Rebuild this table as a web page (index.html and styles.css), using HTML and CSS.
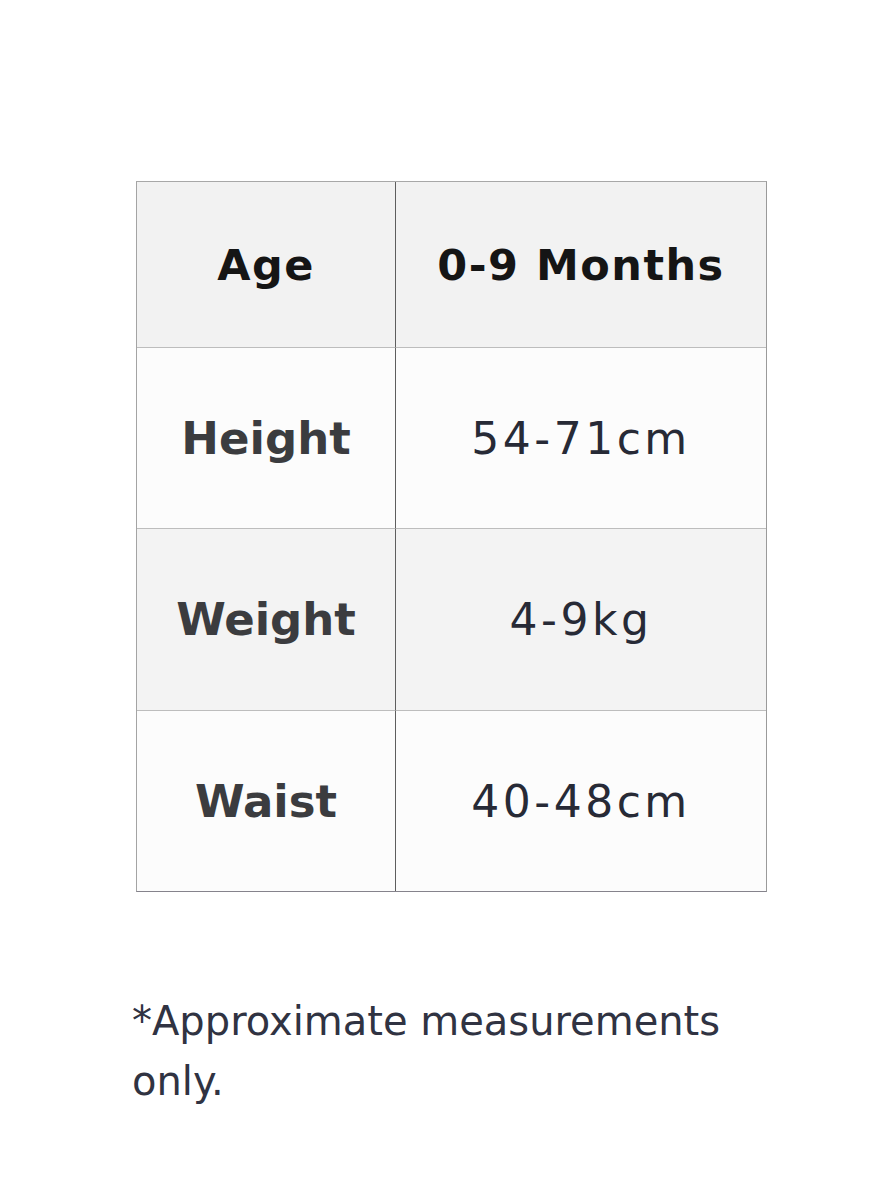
FILE: index.html
```html
<!DOCTYPE html>
<html lang="en">
<head>
<meta charset="utf-8">
<title>Size chart</title>
<link rel="stylesheet" href="styles.css">
</head>
<body>
<main class="page">
  <div class="chart">
    <div class="cell head label">Age</div>
    <div class="cell head value">0-9 Months</div>
    <div class="cell label">Height</div>
    <div class="cell value">54-71cm</div>
    <div class="cell shade label">Weight</div>
    <div class="cell shade value">4-9kg</div>
    <div class="cell label last">Waist</div>
    <div class="cell value last">40-48cm</div>
  </div>
  <p class="note">*Approximate measurements only.</p>
</main>
</body>
</html>
```

FILE: styles.css
```css
html, body {
  margin: 0;
  padding: 0;
  background: #ffffff;
}
.page {
  padding: 181px 0 0 136px;
  font-family: "DejaVu Sans", "Liberation Sans", sans-serif;
}
.chart {
  width: 631px;
  display: grid;
  grid-template-columns: 259px 1fr;
  grid-template-rows: 165px 181px 182px 181px;
  box-sizing: border-box;
  border: 1px solid #a8a8a8;
  border-right-color: #9a9a9a;
  border-bottom-color: #85838c;
  border-left-color: #a4a4a4;
}
.cell {
  display: flex;
  align-items: center;
  justify-content: center;
  background: #fcfcfc;
  border-top: 1px solid #bdbdbd;
  font-size: 44px;
  letter-spacing: 3.5px;
  color: #272a36;
}
.cell.head {
  border-top: none;
  background: #f2f2f2;
  color: #151515;
  font-weight: 700;
  font-size: 43px;
  letter-spacing: 1.5px;
}
.cell.shade {
  background: #f3f3f3;
}
.cell.label {
  border-right: 1px solid #5e5e5e;
  font-weight: 700;
  font-size: 45px;
  letter-spacing: 0;
  color: #3b3c3f;
}
.cell.head.label {
  color: #151515;
  font-size: 43px;
  letter-spacing: 1.5px;
}
.note {
  margin: 99px 0 0 -4px;
  width: 610px;
  font-size: 40px;
  line-height: 60px;
  color: #303342;
}
```
